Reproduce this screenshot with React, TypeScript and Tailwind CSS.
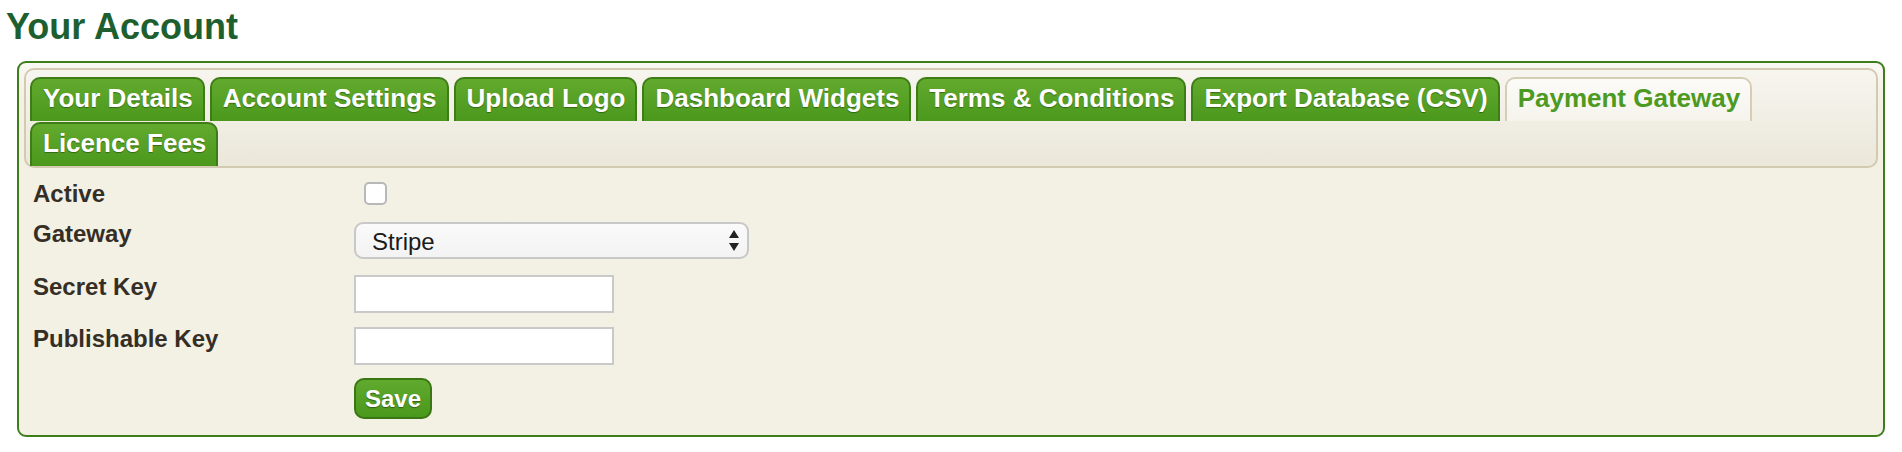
import { useState } from 'react';

const TABS = [
  'Your Details',
  'Account Settings',
  'Upload Logo',
  'Dashboard Widgets',
  'Terms & Conditions',
  'Export Database (CSV)',
  'Payment Gateway',
  'Licence Fees',
];

export default function App() {
  const [active, setActive] = useState('Payment Gateway');
  const [enabled, setEnabled] = useState(false);
  const [gateway, setGateway] = useState('stripe');

  return (
    <div className="min-h-[452px] bg-white px-[6px] font-['Liberation_Sans',Arial,sans-serif]">
      <h1 className="mt-[6px] text-[36px] leading-[42px] font-bold text-[#1e5f30]">Your Account</h1>

      <div className="mt-[13px] mx-[11px] rounded-[9px] border-2 border-[#3d7d1a] bg-linear-to-b from-[#f9f8f3] from-0% to-[#f3f0e4] to-10% p-[5px]">
        <ul className="flex flex-wrap gap-x-[5px] rounded-[10px] border-2 border-[#d4cab2] bg-linear-to-b from-[#f7f5ef] to-[#ebe7da] pt-[6px] px-[4px]">
          {TABS.map((tab) => {
            const isActive = tab === active;
            return (
              <li
                key={tab}
                onClick={() => setActive(tab)}
                className={
                  isActive
                    ? 'mt-[1px] h-[44px] cursor-pointer rounded-t-[10px] border-2 border-b-0 border-[#d6cdb5] bg-linear-to-b from-[#fcfbf8] to-[#f5f3ec] pl-[11px] pr-[10px] pt-[4px] text-[26px] leading-[30px] font-bold text-[#4c9a1f]'
                    : 'mt-[1px] h-[44px] cursor-pointer rounded-t-[10px] border-2 border-b-0 border-[#3d7c17] bg-linear-to-b from-[#62aa2e] to-[#4a981c] pl-[11px] pr-[10px] pt-[4px] text-[26px] leading-[30px] font-bold text-white [text-shadow:0_1px_1px_rgba(0,0,0,0.35)]'
                }
              >
                {tab}
              </li>
            );
          })}
        </ul>

        <form className="mt-[14px] pl-[9px] pb-[11px]" onSubmit={(e) => e.preventDefault()}>
          <div className="flex items-start">
            <label className="w-[321px] shrink-0 text-[24px] leading-[24px] font-bold text-[#352e25]">Active</label>
            <input
              type="checkbox"
              checked={enabled}
              onChange={(e) => setEnabled(e.target.checked)}
              className="ml-[10px] h-[23px] w-[23px] appearance-none rounded-[5px] border-2 border-[#b8b8b8] bg-white"
            />
          </div>

          <div className="mt-[16px] flex items-start">
            <label className="w-[321px] shrink-0 text-[24px] leading-[24px] font-bold text-[#352e25]">Gateway</label>
            <div className="relative w-[395px]">
              <select
                value={gateway}
                onChange={(e) => setGateway(e.target.value)}
                className="h-[37px] w-full appearance-none rounded-[9px] border-2 border-[#c8c8c8] bg-linear-to-b from-[#fafafa] to-[#f3f3f3] pl-4 text-[24px] text-[#1a1a1a] outline-none"
              >
                <option value="stripe">Stripe</option>
                <option value="paypal">PayPal</option>
              </select>
              <svg
                viewBox="0 0 10 22"
                className="pointer-events-none absolute right-[10px] top-1/2 h-[22px] w-[10px] -translate-y-1/2"
              >
                <polygon points="5,0 10,8 0,8" fill="#222" />
                <polygon points="0,13 10,13 5,21" fill="#222" />
              </svg>
            </div>
          </div>

          <div className="mt-[16px] flex items-start">
            <label className="w-[321px] shrink-0 text-[24px] leading-[24px] font-bold text-[#352e25]">Secret Key</label>
            <input type="text" className="h-[38px] w-[260px] border-2 border-[#c9c9c9] bg-white px-2 text-[22px] outline-none" />
          </div>

          <div className="mt-[14px] flex items-start">
            <label className="w-[321px] shrink-0 text-[24px] leading-[24px] font-bold text-[#352e25]">Publishable Key</label>
            <input type="text" className="h-[38px] w-[260px] border-2 border-[#c9c9c9] bg-white px-2 text-[22px] outline-none" />
          </div>

          <div className="mt-[13px] flex items-start">
            <div className="w-[321px] shrink-0" />
            <button
              type="submit"
              className="h-[41px] w-[78px] cursor-pointer rounded-[10px] border-2 border-[#3a7614] bg-linear-to-b from-[#60aa2e] to-[#4a981c] text-[24px] leading-[24px] font-bold text-white [text-shadow:0_1px_1px_rgba(0,0,0,0.4)]"
            >
              Save
            </button>
          </div>
        </form>
      </div>
    </div>
  );
}
